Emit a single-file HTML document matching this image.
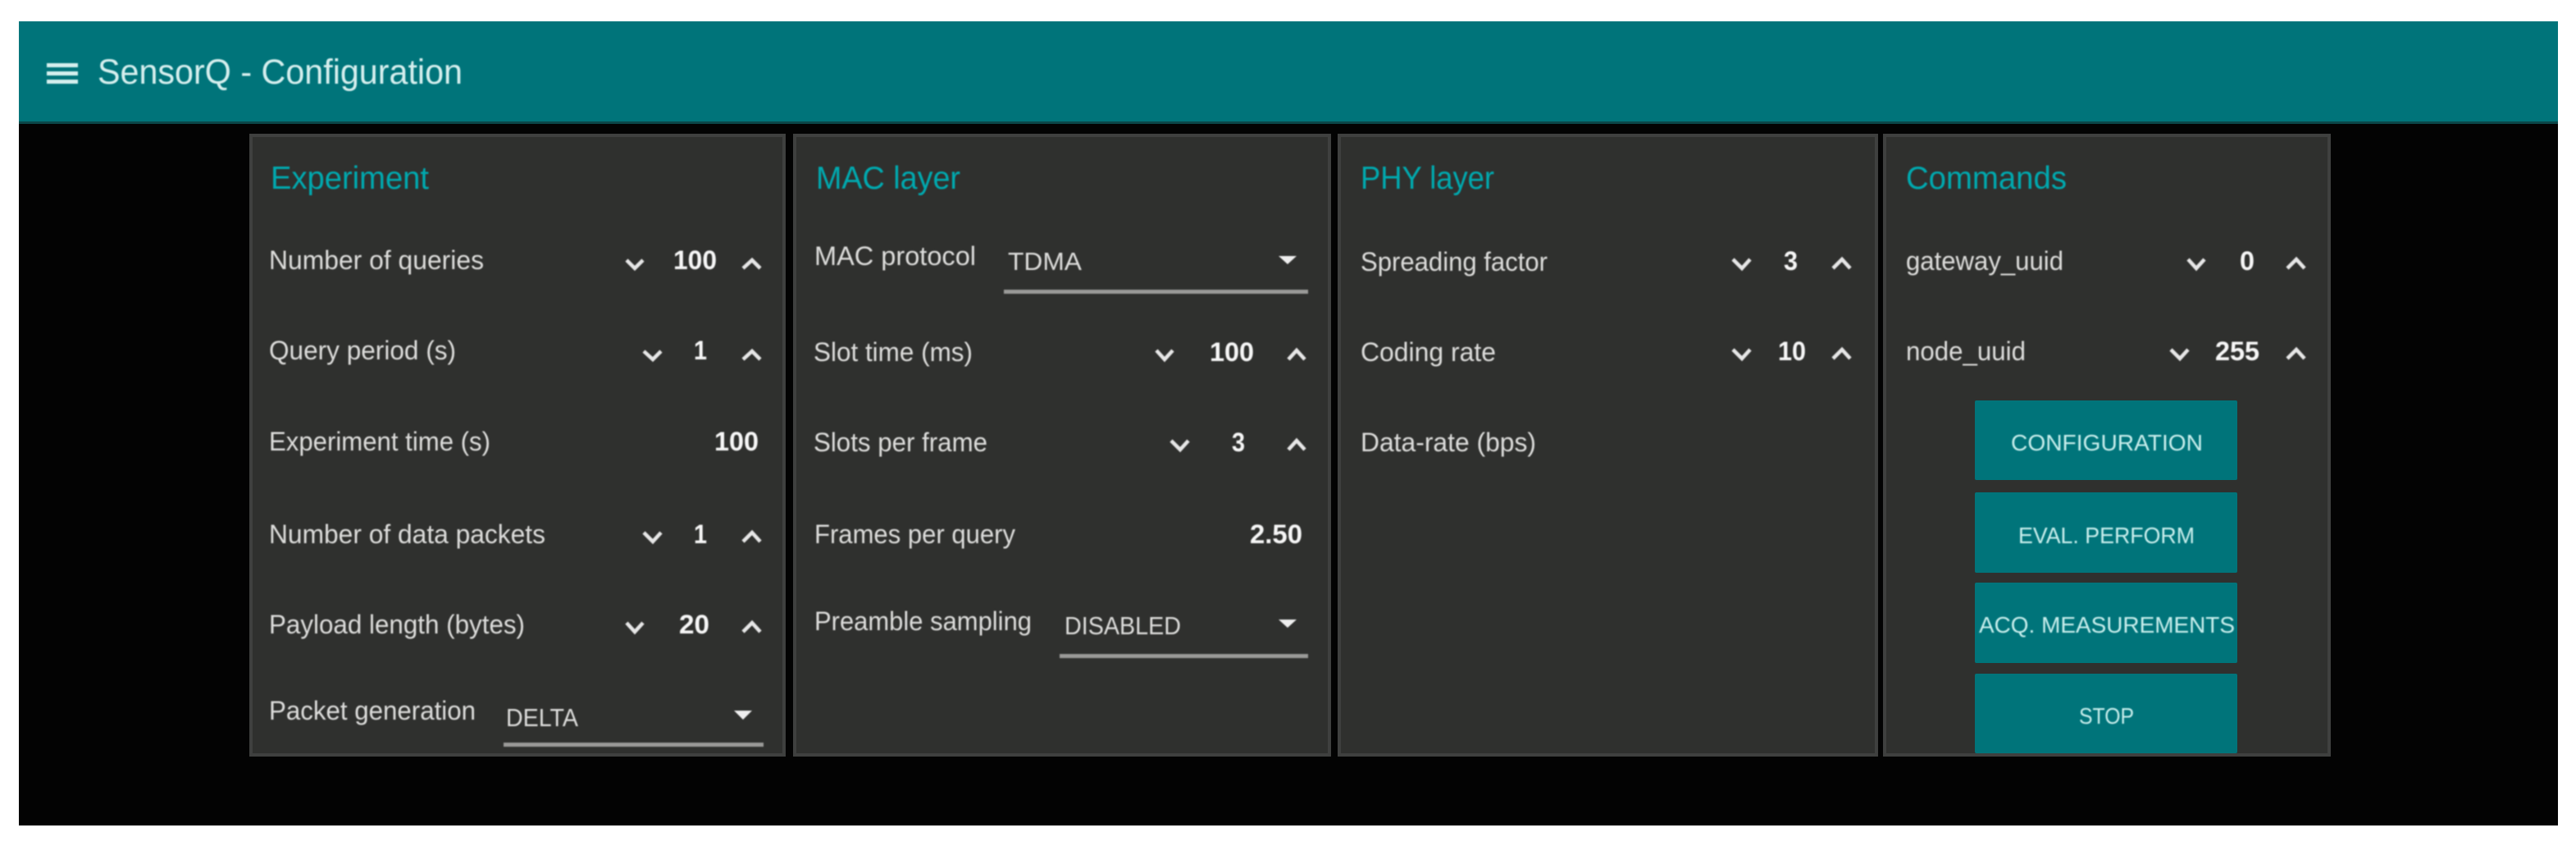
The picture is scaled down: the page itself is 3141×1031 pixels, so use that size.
<!DOCTYPE html>
<html><head><meta charset="utf-8"><title>SensorQ - Configuration</title>
<style>
html,body{margin:0;padding:0;background:#fff;width:3141px;height:1031px;overflow:hidden}
svg{display:block}
text{font-family:"Liberation Sans",sans-serif}
.l{font-size:32px;fill:#dcdcda}
.v{font-size:32px;fill:#f6f6f6;font-weight:bold}
.h{font-size:39px;fill:#00a8ae}
.s{font-size:31px;fill:#dcdcda}
.b{font-size:28px;fill:#c8eeec}
.c{fill:none;stroke:#e6e6e6;stroke-width:4.5}
.u{fill:#9a9a98}
.a{fill:#eee}
.p{fill:#2f302e;stroke:#3f403f;stroke-width:4}
.btn{fill:#00747a}
</style></head><body>
<svg width="3141" height="1031" viewBox="0 0 3141 1031" xmlns="http://www.w3.org/2000/svg">
<defs><filter id="f" x="-5%" y="-5%" width="110%" height="110%"><feGaussianBlur stdDeviation="0.9"/></filter></defs>
<rect width="3141" height="1031" fill="#fff"/>
<rect x="23" y="26" width="3096" height="980" fill="#030303"/>
<rect x="23" y="26" width="3096" height="124" fill="#00747a"/>
<rect x="23" y="148" width="3096" height="3" fill="#0b4749"/>
<rect x="306" y="165" width="650" height="755" class="p"/>
<rect x="969" y="165" width="652" height="755" class="p"/>
<rect x="1633" y="165" width="655" height="755" class="p"/>
<rect x="2298" y="165" width="542" height="755" class="p"/>
<rect x="2408" y="488" width="320" height="97" rx="2" class="btn"/>
<rect x="2408" y="600" width="320" height="98" rx="2" class="btn"/>
<rect x="2408" y="710" width="320" height="98" rx="2" class="btn"/>
<rect x="2408" y="821" width="320" height="97" rx="2" class="btn"/>
<g filter="url(#f)">
<g fill="#d5efee"><rect x="57" y="77" width="38" height="5"/><rect x="57" y="87" width="38" height="5"/><rect x="57" y="97" width="38" height="5"/></g>
<text x="119" y="102" font-size="43" fill="#d5efee" textLength="445" lengthAdjust="spacingAndGlyphs">SensorQ - Configuration</text>

<text class="h" x="330" y="230" textLength="193" lengthAdjust="spacingAndGlyphs">Experiment</text>
<text class="h" x="995" y="230" textLength="176" lengthAdjust="spacingAndGlyphs">MAC layer</text>
<text class="h" x="1659" y="230" textLength="163" lengthAdjust="spacingAndGlyphs">PHY layer</text>
<text class="h" x="2324" y="230" textLength="196" lengthAdjust="spacingAndGlyphs">Commands</text>

<text class="l" x="328" y="328" textLength="262" lengthAdjust="spacingAndGlyphs">Number of queries</text>
<text class="l" x="328" y="438" textLength="228" lengthAdjust="spacingAndGlyphs">Query period (s)</text>
<text class="l" x="328" y="549" textLength="270" lengthAdjust="spacingAndGlyphs">Experiment time (s)</text>
<text class="l" x="328" y="662" textLength="337" lengthAdjust="spacingAndGlyphs">Number of data packets</text>
<text class="l" x="328" y="772" textLength="312" lengthAdjust="spacingAndGlyphs">Payload length (bytes)</text>
<text class="l" x="328" y="877" textLength="252" lengthAdjust="spacingAndGlyphs">Packet generation</text>
<text class="s" x="617" y="885" textLength="88" lengthAdjust="spacingAndGlyphs">DELTA</text>

<text class="v" x="821" y="328" textLength="53" lengthAdjust="spacingAndGlyphs">100</text>
<text class="v" x="846" y="438" textLength="16" lengthAdjust="spacingAndGlyphs">1</text>
<text class="v" x="871" y="549" textLength="54" lengthAdjust="spacingAndGlyphs">100</text>
<text class="v" x="846" y="662" textLength="16" lengthAdjust="spacingAndGlyphs">1</text>
<text class="v" x="828" y="772" textLength="37" lengthAdjust="spacingAndGlyphs">20</text>

<text class="l" x="993" y="323" textLength="197" lengthAdjust="spacingAndGlyphs">MAC protocol</text>
<text class="s" x="1229" y="329" textLength="90" lengthAdjust="spacingAndGlyphs">TDMA</text>
<text class="l" x="992" y="440" textLength="194" lengthAdjust="spacingAndGlyphs">Slot time (ms)</text>
<text class="l" x="992" y="550" textLength="212" lengthAdjust="spacingAndGlyphs">Slots per frame</text>
<text class="l" x="993" y="662" textLength="245" lengthAdjust="spacingAndGlyphs">Frames per query</text>
<text class="l" x="993" y="768" textLength="265" lengthAdjust="spacingAndGlyphs">Preamble sampling</text>
<text class="s" x="1298" y="773" textLength="142" lengthAdjust="spacingAndGlyphs">DISABLED</text>

<text class="v" x="1475" y="440" textLength="54" lengthAdjust="spacingAndGlyphs">100</text>
<text class="v" x="1502" y="550" textLength="16" lengthAdjust="spacingAndGlyphs">3</text>
<text class="v" x="1524" y="662" textLength="64" lengthAdjust="spacingAndGlyphs">2.50</text>

<text class="l" x="1659" y="330" textLength="228" lengthAdjust="spacingAndGlyphs">Spreading factor</text>
<text class="l" x="1659" y="440" textLength="165" lengthAdjust="spacingAndGlyphs">Coding rate</text>
<text class="l" x="1659" y="550" textLength="214" lengthAdjust="spacingAndGlyphs">Data-rate (bps)</text>
<text class="v" x="2175" y="329" textLength="17" lengthAdjust="spacingAndGlyphs">3</text>
<text class="v" x="2168" y="439" textLength="34" lengthAdjust="spacingAndGlyphs">10</text>

<text class="l" x="2324" y="329" textLength="192" lengthAdjust="spacingAndGlyphs">gateway_uuid</text>
<text class="l" x="2324" y="439" textLength="146" lengthAdjust="spacingAndGlyphs">node_uuid</text>
<text class="v" x="2731" y="329" textLength="18" lengthAdjust="spacingAndGlyphs">0</text>
<text class="v" x="2701" y="439" textLength="54" lengthAdjust="spacingAndGlyphs">255</text>

<text class="b" x="2452" y="549" textLength="234" lengthAdjust="spacingAndGlyphs">CONFIGURATION</text>
<text class="b" x="2461" y="662" textLength="215" lengthAdjust="spacingAndGlyphs">EVAL. PERFORM</text>
<text class="b" x="2413" y="771" textLength="312" lengthAdjust="spacingAndGlyphs">ACQ. MEASUREMENTS</text>
<text class="b" x="2535" y="882" textLength="67" lengthAdjust="spacingAndGlyphs">STOP</text>

<g class="c">
<path d="M764 317l10 10 10-10"/><path d="M906 327l11-10 10 10"/>
<path d="M785 428l11 10 10-10"/><path d="M906 438l11-10 10 10"/>
<path d="M785 649l11 11 10-11"/><path d="M906 660l11-11 10 11"/>
<path d="M764 759l10 11 10-11"/><path d="M906 770l11-11 10 11"/>

<path d="M1410 427l10 11 10-11"/><path d="M1571 438l10-11 10 11"/>
<path d="M1428 537l11 11 10-11"/><path d="M1571 548l10-11 10 11"/>

<path d="M2113 316l11 11 10-11"/><path d="M2235 327l11-11 10 11"/>
<path d="M2113 426l11 11 10-11"/><path d="M2235 437l11-11 10 11"/>

<path d="M2668 316l10 11 10-11"/><path d="M2789 327l11-11 10 11"/>
<path d="M2647 426l11 11 10-11"/><path d="M2789 437l11-11 10 11"/>
</g>
<g class="a">
<path d="M895 866h22l-11 11z"/>
<path d="M1559 312h22l-11 10z"/>
<path d="M1559 755h22l-11 10z"/>
</g>
<rect class="u" x="614" y="905" width="317" height="5"/>
<rect class="u" x="1224" y="353" width="371" height="5"/>
<rect class="u" x="1292" y="797" width="303" height="5"/>
</g>
</svg>
</body></html>
